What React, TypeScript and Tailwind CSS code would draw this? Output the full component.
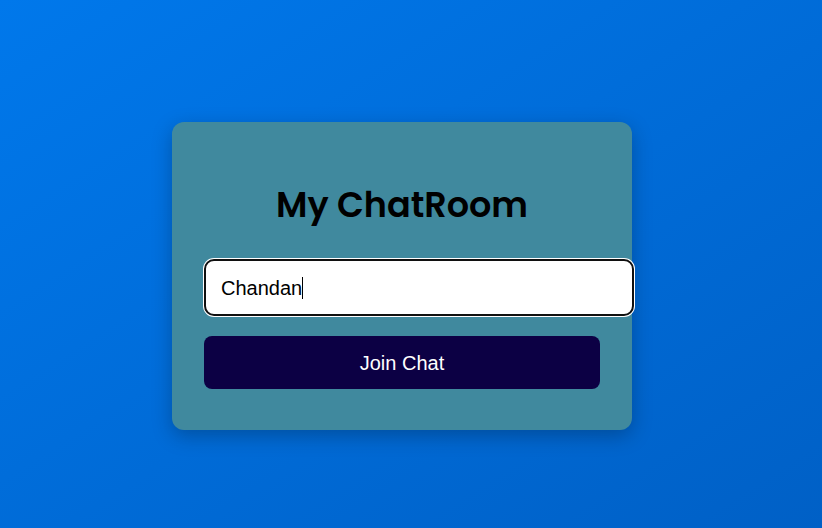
import React, { useEffect, useRef, useState } from 'react';

export default function App() {
  const [name, setName] = useState('Chandan');
  const inputRef = useRef<HTMLInputElement>(null);

  useEffect(() => {
    const el = inputRef.current;
    if (el) {
      el.focus();
      el.setSelectionRange(el.value.length, el.value.length);
    }
  }, []);

  return (
    <div className="min-h-screen w-full bg-gradient-to-br from-[#0078eb] to-[#0060c6] pl-[172px] pt-[122px]">
      <div className="w-[460px] rounded-xl bg-[#40899e] px-8 pt-[58px] pb-[41px] shadow-[0_6px_20px_rgba(0,0,0,0.25)]">
        <h2 className="text-center font-['Poppins','Inter',sans-serif] text-[35px] font-semibold leading-[50px] text-black">
          My ChatRoom
        </h2>
        <form className="mt-[29px] flex flex-col" onSubmit={(e) => e.preventDefault()}>
          <div className="relative w-[430px]">
            <input
              ref={inputRef}
              value={name}
              onChange={(e) => setName(e.target.value)}
              className="box-content h-[23px] w-[396px] rounded-[10px] border-2 border-[#101010] bg-white px-[15px] py-[15px] font-['Liberation_Sans',Arial,sans-serif] text-[20px] text-black caret-transparent shadow-[0_0_0_1px_#ffffff] outline-none"
            />
            <div className="pointer-events-none absolute left-[17px] top-[17px] flex h-[23px] items-center font-['Liberation_Sans',Arial,sans-serif] text-[20px]">
              <span className="invisible whitespace-pre">{name}</span>
              <span className="h-[22px] w-px bg-black" />
            </div>
          </div>
          <button
            type="submit"
            className="mt-5 h-[53px] w-[396px] rounded-lg bg-[#0c0044] font-['Liberation_Sans',Arial,sans-serif] text-[20px] text-white"
          >
            Join Chat
          </button>
        </form>
      </div>
    </div>
  );
}
